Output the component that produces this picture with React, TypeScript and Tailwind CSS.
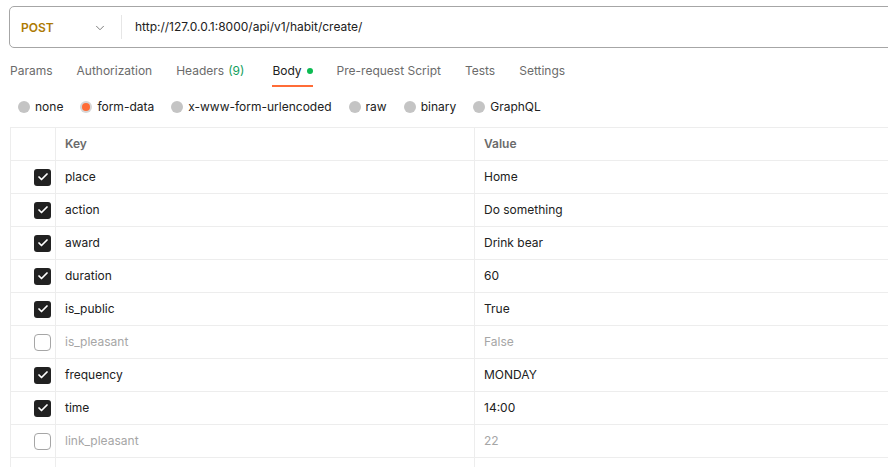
import { ChevronDown, Check } from 'lucide-react'

const tabs = [
  { label: 'Params' },
  { label: 'Authorization' },
  { label: 'Headers', count: '(9)' },
  { label: 'Body', active: true },
  { label: 'Pre-request Script' },
  { label: 'Tests' },
  { label: 'Settings' },
]

const bodyTypes = [
  { label: 'none' },
  { label: 'form-data', selected: true },
  { label: 'x-www-form-urlencoded' },
  { label: 'raw' },
  { label: 'binary' },
  { label: 'GraphQL' },
]

const rows = [
  { key: 'place', value: 'Home', on: true },
  { key: 'action', value: 'Do something', on: true },
  { key: 'award', value: 'Drink bear', on: true },
  { key: 'duration', value: '60', on: true },
  { key: 'is_public', value: 'True', on: true },
  { key: 'is_pleasant', value: 'False', on: false },
  { key: 'frequency', value: 'MONDAY', on: true },
  { key: 'time', value: '14:00', on: true },
  { key: 'link_pleasant', value: '22', on: false },
]

export default function App() {
  return (
    <div className="h-[467px] w-[888px] overflow-hidden bg-white text-[12px] leading-[16px] text-[#212121] font-['Inter',sans-serif]">
      {/* Request bar */}
      <div className="pl-[9px] pt-[6px]">
        <div className="-mr-4 flex h-[42px] items-center rounded-[5px] border border-[#a6a6a6]">
          <div className="flex w-[111px] items-center justify-between pl-[11px] pr-[14px] pt-[1px]">
            <span className="font-semibold text-[#ad7a03]">POST</span>
            <ChevronDown className="h-[14px] w-[14px] text-[#6b6b6b]" strokeWidth={1.5} />
          </div>
          <div className="h-[24px] w-px bg-[#e6e6e6]" />
          <span className="pl-[13px]">http://127.0.0.1:8000/api/v1/habit/create/</span>
        </div>
      </div>

      {/* Tabs */}
      <div className="flex pl-[10px]">
        {tabs.map((t) => (
          <div
            key={t.label}
            className={`flex items-center border-b-2 pb-[6px] pt-[15px] ${t.count ? 'mr-[28px]' : 'mr-[24px]'} ${
              t.active ? 'border-[#ff6c37] text-[#212121]' : 'border-transparent text-[#6b6b6b]'
            }`}
          >
            <span>{t.label}</span>
            {t.count && <span className="ml-[4px] text-[#129e5c]">{t.count}</span>}
            {t.active && <span className="ml-[5px] h-[6px] w-[6px] rounded-full bg-[#0cbb52]" />}
          </div>
        ))}
      </div>

      {/* Body type radios */}
      <div className="flex h-[40px] items-center pl-[18px]">
        {bodyTypes.map((b) => (
          <div key={b.label} className="mr-[17px] flex items-center gap-[5px]">
            {b.selected ? (
              <span className="flex h-[12px] w-[12px] items-center justify-center rounded-full bg-[#d6d6d6]">
                <span className="h-[8px] w-[8px] rounded-full bg-[#ff6c37]" />
              </span>
            ) : (
              <span className="h-[12px] w-[12px] rounded-full bg-[#c4c4c4]" />
            )}
            <span>{b.label}</span>
          </div>
        ))}
      </div>

      {/* Table */}
      <div className="ml-[10px] -mr-4 border-l border-t border-[#ededed]">
        <div className="flex h-[33px] border-b border-[#ededed]">
          <div className="w-[45px] border-r border-[#ededed]" />
          <div className="flex w-[419px] items-center border-r border-[#ededed] pl-[9px] font-semibold text-[#6b6b6b]">
            Key
          </div>
          <div className="flex flex-1 items-center pl-[9px] font-semibold text-[#6b6b6b]">Value</div>
        </div>
        {rows.map((r) => (
          <div key={r.key} className="flex h-[33px] border-b border-[#ededed]">
            <div className="flex w-[45px] items-center justify-end border-r border-[#ededed] pr-[4px]">
              {r.on ? (
                <span className="flex h-[17px] w-[17px] items-center justify-center rounded-[3px] bg-[#212121]">
                  <Check className="h-[12px] w-[12px] text-white" strokeWidth={3.5} />
                </span>
              ) : (
                <span className="h-[17px] w-[17px] rounded-[4px] border border-[#a6a6a6] bg-white" />
              )}
            </div>
            <div
              className={`flex w-[419px] items-center border-r border-[#ededed] pl-[9px] ${
                r.on ? 'text-[#212121]' : 'text-[#a6a6a6]'
              }`}
            >
              {r.key}
            </div>
            <div className={`flex flex-1 items-center pl-[9px] ${r.on ? 'text-[#212121]' : 'text-[#a6a6a6]'}`}>
              {r.value}
            </div>
          </div>
        ))}
        <div className="flex h-[33px]">
          <div className="w-[45px] border-r border-[#ededed]" />
          <div className="w-[419px] border-r border-[#ededed]" />
        </div>
      </div>
    </div>
  )
}
